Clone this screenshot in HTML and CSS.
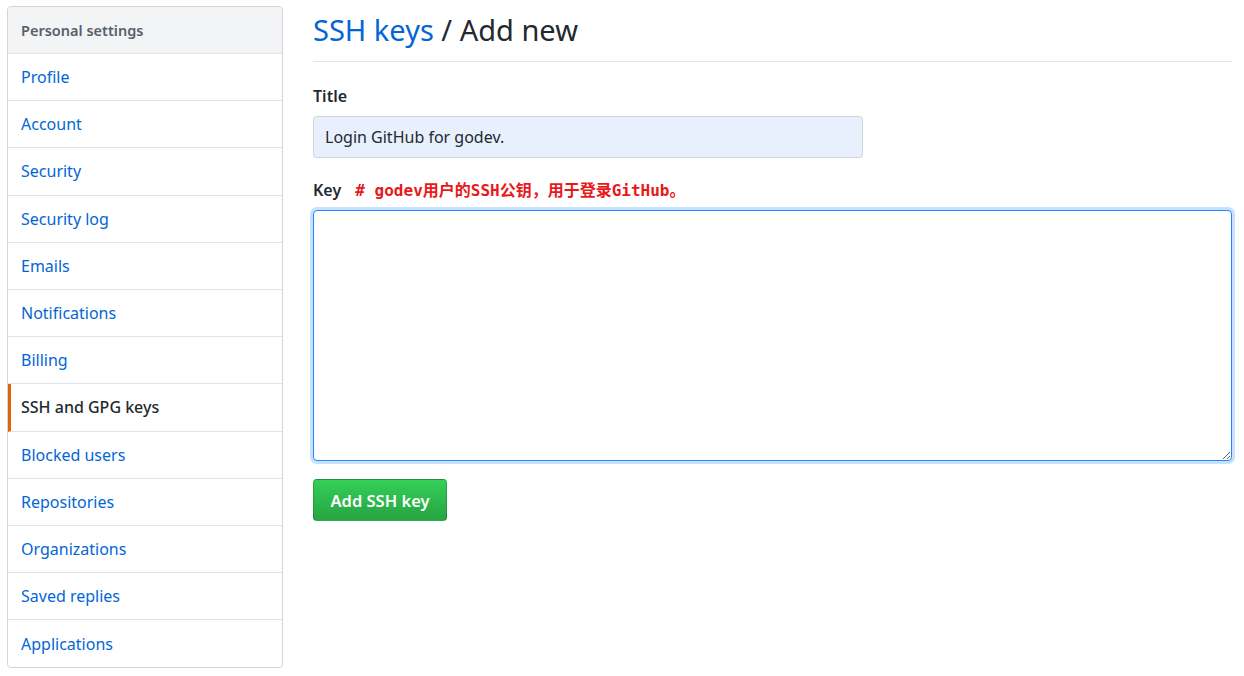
FILE: index.html
```html
<!DOCTYPE html>
<html lang="en">
<head>
<meta charset="utf-8">
<title>SSH keys / Add new</title>
<link rel="stylesheet" href="styles.css">
</head>
<body>
<div class="page">
  <nav class="menu">
    <div class="menu-heading">Personal settings</div>
    <a class="menu-item" href="#">Profile</a>
    <a class="menu-item" href="#">Account</a>
    <a class="menu-item" href="#">Security</a>
    <a class="menu-item" href="#">Security log</a>
    <a class="menu-item" href="#">Emails</a>
    <a class="menu-item" href="#">Notifications</a>
    <a class="menu-item" href="#">Billing</a>
    <a class="menu-item selected" href="#">SSH and GPG keys</a>
    <a class="menu-item" href="#">Blocked users</a>
    <a class="menu-item" href="#">Repositories</a>
    <a class="menu-item" href="#">Organizations</a>
    <a class="menu-item" href="#">Saved replies</a>
    <a class="menu-item last" href="#">Applications</a>
  </nav>
  <main class="main">
    <h2 class="subhead"><a href="#">SSH keys</a> / Add new</h2>
    <form class="form">
      <div class="group">
        <label class="label">Title</label>
        <input class="input" type="text" value="Login GitHub for godev.">
      </div>
      <div class="group key-group">
        <label class="label">Key <span class="note"># godev用户的SSH公钥，用于登录GitHub。</span></label>
        <textarea class="textarea"></textarea>
      </div>
      <button class="btn" type="button">Add SSH key</button>
    </form>
  </main>
</div>
</body>
</html>
```
FILE: styles.css
```css
* { box-sizing: border-box; }
html, body { margin: 0; padding: 0; background: #fff; }
body {
  font-family: "Noto Sans", "Open Sans", sans-serif;
  font-size: 16px;
  color: #24292e;
}
.page {
  display: flex;
  align-items: flex-start;
  padding: 6px 12px 0 7px;
  gap: 30px;
}
.menu {
  width: 276px;
  flex: none;
  border: 1px solid #d1d5da;
  border-radius: 4px;
  display: flex;
  flex-direction: column;
  overflow: hidden;
}
.menu-heading {
  height: 47px;
  display: flex;
  align-items: center;
  padding: 0 13px;
  background: #f3f4f6;
  color: #586069;
  font-weight: 600;
  font-size: 14.5px;
  border-bottom: 1px solid #e1e4e8;
}
.menu-item {
  height: 47.2px;
  display: flex;
  align-items: center;
  padding: 0 13px;
  color: #0366d6;
  text-decoration: none;
  border-bottom: 1px solid #e1e4e8;
  position: relative;
}
.menu-item.last { border-bottom: 0; }
.menu-item.selected {
  color: #24292e;
  font-weight: 500;
  border-left: 3px solid #e36209;
  padding-left: 10px;
}
.main {
  flex: 1;
  min-width: 0;
}
.subhead {
  margin: 0;
  font-weight: 400;
  font-size: 29px;
  line-height: 36px;
  padding: 6px 0 13px;
  border-bottom: 1px solid #e1e4e8;
}
.subhead a { color: #0366d6; text-decoration: none; }
.form { padding-top: 22px; }
.group { margin-bottom: 19px; }
.key-group { margin-bottom: 18px; }
.label {
  display: block;
  font-weight: 600;
  font-size: 16px;
  line-height: 24px;
  margin-bottom: 8px;
}
.key-group .label { line-height: 26px; margin-bottom: 6px; }
.note {
  color: #e8191b;
  font-family: "DejaVu Sans Mono", "Noto Sans CJK SC", monospace;
  font-weight: 700;
  font-size: 16px;
  margin-left: 10px;
}
.input {
  display: block;
  width: 550px;
  height: 42px;
  padding: 0 11px;
  font: inherit;
  font-size: 16px;
  color: #24292e;
  background: #e8f0fe;
  border: 1px solid #d1d5da;
  border-radius: 4px;
  outline: none;
}
.textarea {
  display: block;
  width: 100%;
  height: 251px;
  font: inherit;
  border: 1px solid #2188ff;
  border-radius: 4px;
  box-shadow: 0 0 0 3px #c8e1ff;
  outline: none;
  resize: vertical;
}
.btn {
  display: block;
  width: 134px;
  height: 42px;
  font: inherit;
  font-weight: 600;
  font-size: 16.5px;
  color: #fff;
  background: linear-gradient(-180deg, #34d058 0%, #28a745 90%);
  border: 1px solid rgba(27,31,35,0.2);
  border-radius: 4px;
  padding: 0;
}
```
